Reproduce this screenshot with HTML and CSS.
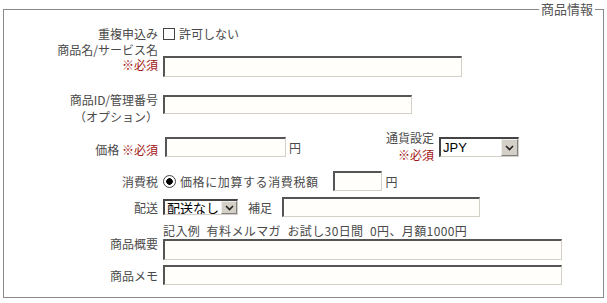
FILE: index.html
```html
<!DOCTYPE html>
<html lang="ja">
<head>
  <meta charset="UTF-8">
  <title>商品情報</title>
  <link rel="stylesheet" href="styles.css">
</head>
<body>
  <form class="item-form">
    <fieldset class="box">
      <legend>商品情報</legend>

      <!-- 重複申込み -->
      <div class="row r-dup">
        <div class="lbl">重複申込み</div>
        <label class="opt"><input type="checkbox" class="chk"><span>許可しない</span></label>
      </div>

      <!-- 商品名 -->
      <div class="row r-name">
        <div class="lbl">商品名/サービス名<br><span class="req">※必須</span></div>
        <input type="text" class="txt w-name">
      </div>

      <!-- 商品ID -->
      <div class="row r-id">
        <div class="lbl">商品ID/管理番号<br>（オプション）</div>
        <input type="text" class="txt w-id">
      </div>

      <!-- 価格 / 通貨 -->
      <div class="row r-price">
        <div class="lbl lbl-price">価格 <span class="req">※必須</span></div>
        <input type="text" class="txt w-price">
        <span class="unit">円</span>
        <div class="cur-lbl">通貨設定<br><span class="req">※必須</span></div>
        <span class="sel sel-cur">
          <select><option>JPY</option></select>
          <span class="sel-btn"><svg width="9" height="6" viewBox="0 0 9 6"><path d="M1 1 L4.5 4.5 L8 1" fill="none" stroke="#222" stroke-width="1.6"/></svg></span>
        </span>
      </div>

      <!-- 消費税 -->
      <div class="row r-tax">
        <div class="lbl">消費税</div>
        <label class="opt opt-tax"><input type="radio" class="rad" name="tax" checked><span>価格に加算する消費税額</span></label>
        <input type="text" class="txt w-tax">
        <span class="unit unit-tax">円</span>
      </div>

      <!-- 配送 -->
      <div class="row r-ship">
        <div class="lbl">配送</div>
        <span class="sel sel-ship">
          <select><option>配送なし</option></select>
          <span class="sel-btn"><svg width="9" height="6" viewBox="0 0 9 6"><path d="M1 1 L4.5 4.5 L8 1" fill="none" stroke="#222" stroke-width="1.6"/></svg></span>
        </span>
        <span class="sub-lbl">補足</span>
        <input type="text" class="txt w-note">
      </div>

      <!-- 商品概要 -->
      <div class="row r-desc">
        <div class="lbl lbl-desc">商品概要</div>
        <div class="fld">
          <div class="hint">記入例&ensp;有料メルマガ&ensp;お試し30日間&ensp;0円、月額1000円</div>
          <input type="text" class="txt w-wide">
        </div>
      </div>

      <!-- 商品メモ -->
      <div class="row r-memo">
        <div class="lbl">商品メモ</div>
        <input type="text" class="txt w-wide h-memo">
      </div>
    </fieldset>
  </form>
</body>
</html>
```

FILE: styles.css
```css
* { box-sizing:border-box; }
body {
  margin:0;
  padding:2px 0 0 3px;
  font-family:"Noto Sans CJK JP", "Noto Sans", sans-serif;
  font-size:12px;
  color:#4a4a4a;
  background:#fff;
}
.item-form { margin:0; }

/* 枠 */
.box {
  width:601px;
  margin:0;
  border:1px solid #8a8a8a;
  padding:0 8px 12px 0;
}
.box legend {
  margin-left:auto;
  padding:0 2px;
  font-size:13px;
  line-height:14px;
  color:#555;
}

/* 行 */
.row { display:flex; align-items:center; }
.lbl {
  flex:none;
  width:154px;
  margin-right:5px;
  text-align:right;
  line-height:17px;
}
.req { color:#a31515; }

.r-dup { margin-top:9px; }
.r-dup .lbl { line-height:15px; }

.r-name { align-items:flex-start; }
.r-name .lbl { line-height:15px; }
.r-name .txt { margin-top:14px; }

.r-id { margin-top:14px; align-items:flex-start; }
.r-id .txt { margin-top:4px; }

.r-price { margin-top:4px; align-items:flex-start; }
.lbl-price { margin-top:12px; }
.r-price .txt { margin-top:8px; margin-left:2px; }
.unit { line-height:17px; margin-left:3px; }
.r-price .unit { margin-top:10px; }
.cur-lbl {
  width:54px;
  margin-left:79px;
  text-align:right;
  line-height:17px;
}
.sel-cur { margin-top:8px; margin-left:5px; }

.r-tax { margin-top:8px; }
.opt-tax span { letter-spacing:.6px; }
.unit-tax { margin-left:4px; }

.r-ship { margin-top:6px; }
.sub-lbl { margin-left:10px; margin-right:10px; }

.r-desc { margin-top:6px; }
.lbl-desc { margin-top:4px; }
.hint { line-height:16px; white-space:nowrap; letter-spacing:.4px; }

.r-memo { margin-top:5px; }

/* 入力欄 */
.txt {
  display:block;
  flex:none;
  height:20px;
  margin:0;
  padding:0 2px;
  font:inherit;
  background:#fffefb;
  border-top:2px solid #555;
  border-left:2px solid #555;
  border-right:1px solid #d4d0c8;
  border-bottom:1px solid #d4d0c8;
  outline:none;
}
.w-name { width:299px; height:21px; }
.w-id { width:249px; height:19px; }
.w-price { width:121px; }
.w-tax { width:49px; margin-left:14px; }
.w-note { width:198px; }
.w-wide { width:399px; height:21px; }
.h-memo { height:20px; }

/* チェック・ラジオ */
.opt { display:flex; align-items:center; }
.chk, .rad {
  appearance:none;
  margin:0 4px 0 0;
  flex:none;
  background:#fff;
}
.chk {
  width:12px; height:12px;
  border:1px solid #444;
}
.rad {
  width:13px; height:13px;
  border:1px solid #444;
  border-radius:50%;
}
.rad:checked { background:radial-gradient(circle, #000 3px, #fff 3.5px); }

/* セレクト */
.sel { position:relative; display:inline-block; flex:none; }
.sel select {
  display:block;
  appearance:none;
  margin:0;
  padding:0 0 0 2px;
  font-size:13px;
  color:#000;
  background:#fff;
  border-top:2px solid #444;
  border-left:2px solid #444;
  border-right:1px solid #d4d0c8;
  border-bottom:1px solid #d4d0c8;
  border-radius:0;
  outline:none;
}
.sel-cur select {
  width:80px; height:20px;
  font-family:"Liberation Sans", Arial, sans-serif;
}
.sel-ship select {
  width:75px; height:16px;
  line-height:14px;
  font-family:"Noto Sans CJK JP", sans-serif;
}
.sel-btn {
  position:absolute;
  top:2px; right:1px; bottom:1px;
  width:17px;
  display:flex; align-items:center; justify-content:center;
  background:#d4d0c8;
  border-top:1px solid #eee;
  border-left:1px solid #eee;
  border-right:1px solid #808080;
  border-bottom:1px solid #808080;
  pointer-events:none;
}
.sel-ship .sel-btn { width:16px; }
```
